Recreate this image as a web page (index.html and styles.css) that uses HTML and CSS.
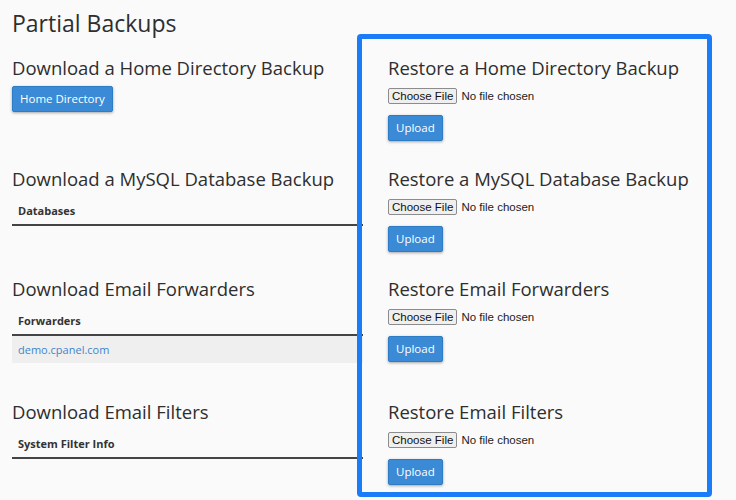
FILE: index.html
```html
<!DOCTYPE html>
<html lang="en">
<head>
<meta charset="utf-8">
<title>Partial Backups</title>
<link rel="stylesheet" href="styles.css">
</head>
<body>
<main class="page">
  <h1 class="title">Partial Backups</h1>
  <div class="grid">
    <section class="cell left">
      <h2 class="heading">Download a Home Directory Backup</h2>
      <button class="btn btn-dl" type="button">Home Directory</button>
    </section>
    <section class="cell right">
      <h2 class="heading">Restore a Home Directory Backup</h2>
      <div class="file"><span class="file-btn">Choose File</span><span class="file-name">No file chosen</span></div>
      <button class="btn btn-up" type="button">Upload</button>
    </section>

    <section class="cell left">
      <h2 class="heading">Download a MySQL Database Backup</h2>
      <table class="tbl">
        <thead><tr><th>Databases</th></tr></thead>
      </table>
    </section>
    <section class="cell right">
      <h2 class="heading">Restore a MySQL Database Backup</h2>
      <div class="file"><span class="file-btn">Choose File</span><span class="file-name">No file chosen</span></div>
      <button class="btn btn-up" type="button">Upload</button>
    </section>

    <section class="cell left">
      <h2 class="heading">Download Email Forwarders</h2>
      <table class="tbl">
        <thead><tr><th>Forwarders</th></tr></thead>
        <tbody><tr><td><a class="link" href="#">demo.cpanel.com</a></td></tr></tbody>
      </table>
    </section>
    <section class="cell right">
      <h2 class="heading">Restore Email Forwarders</h2>
      <div class="file"><span class="file-btn">Choose File</span><span class="file-name">No file chosen</span></div>
      <button class="btn btn-up" type="button">Upload</button>
    </section>

    <section class="cell left">
      <h2 class="heading">Download Email Filters</h2>
      <table class="tbl">
        <thead><tr><th>System Filter Info</th></tr></thead>
      </table>
    </section>
    <section class="cell right">
      <h2 class="heading">Restore Email Filters</h2>
      <div class="file"><span class="file-btn">Choose File</span><span class="file-name">No file chosen</span></div>
      <button class="btn btn-up" type="button">Upload</button>
    </section>
  </div>
  <div class="highlight" aria-hidden="true"></div>
</main>
</body>
</html>
```

FILE: styles.css
```css
html, body {
  margin: 0;
  padding: 0;
  background: #fafafa;
}
body {
  font-family: "Open Sans", "Noto Sans", sans-serif;
  color: #333;
  overflow: hidden;
}
.page {
  position: relative;
  padding: 0 12px;
  height: 500px;
}
.title {
  margin: 0;
  padding-top: 9px;
  font-size: 23px;
  line-height: 28px;
  font-weight: 400;
  color: #2e2e2e;
  margin-bottom: 20px;
}
.grid {
  display: grid;
  grid-template-columns: 351px 1fr;
  column-gap: 25px;
  align-items: start;
}
.heading {
  margin: 0;
  font-size: 18.5px;
  line-height: 22px;
  font-weight: 400;
  color: #2e2e2e;
}
.left .heading {
  margin-bottom: 7px;
}
.right {
  padding-bottom: 26.5px;
}
.btn {
  display: block;
  height: 26px;
  padding: 0 7px;
  border: 1px solid #2f7cc6;
  border-radius: 2px;
  background: #3b8ad6;
  color: #fff;
  font-family: "Open Sans", sans-serif;
  font-size: 11.5px;
  line-height: 24px;
  box-shadow: 0 1px 3px rgba(0, 0, 0, 0.35);
  cursor: pointer;
}
.file {
  display: flex;
  align-items: center;
  gap: 4px;
  margin-top: 9px;
  height: 16px;
  font-family: "Liberation Sans", Arial, sans-serif;
  font-size: 11.5px;
  color: #222;
}
.file-btn {
  box-sizing: border-box;
  height: 16px;
  line-height: 14px;
  padding: 0 3px;
  border: 1px solid #8c8c8c;
  border-radius: 2px;
  background: #efefef;
  color: #111;
}
.btn-up {
  margin-top: 11px;
}
.tbl {
  width: 351px;
  border-collapse: collapse;
  margin-bottom: 38px;
}
.tbl th {
  height: 27px;
  padding: 0 6px;
  text-align: left;
  font-size: 11px;
  font-weight: 700;
  color: #333;
  border-bottom: 2px solid #444;
}
.tbl td {
  height: 27px;
  padding: 0 6px;
  background: #efefef;
  font-size: 11px;
}
.link {
  color: #3f84cc;
  text-decoration: none;
}
.highlight {
  position: absolute;
  left: 357px;
  top: 34px;
  width: 345px;
  height: 453px;
  border: 5px solid #1b7cf7;
  border-radius: 4px;
  pointer-events: none;
}
```
